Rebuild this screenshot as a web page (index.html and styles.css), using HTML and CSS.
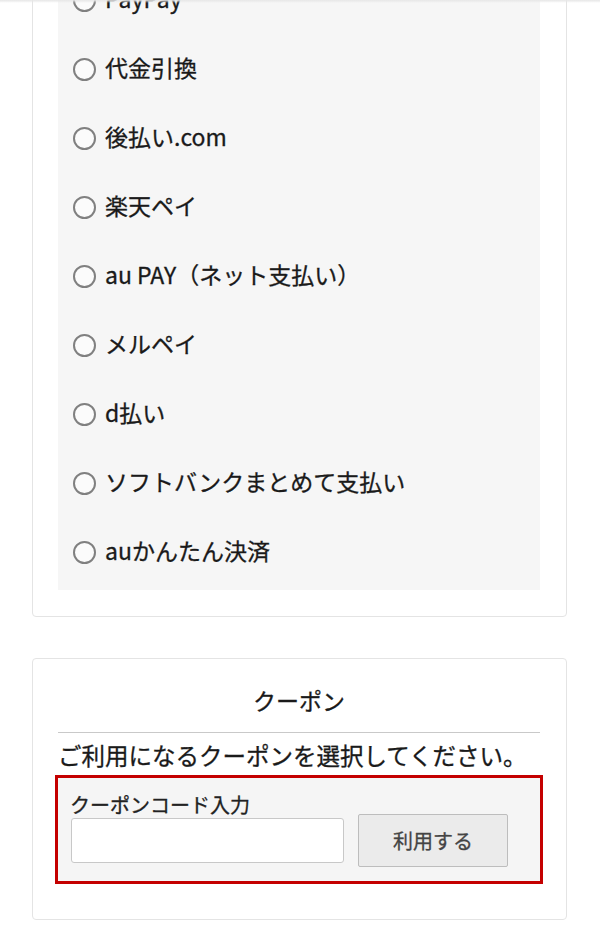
FILE: index.html
```html
<!DOCTYPE html>
<html lang="ja">

<head>
    <meta charset="UTF-8">
    <meta name="viewport" content="width=device-width, initial-scale=1.0">
    <title>お支払い方法</title>

    <link rel="stylesheet" href="styles.css">
</head>

<body>

    <div class="container">
        <div class="card card--payment">
            <div class="payment__list">
                <label class="payment__item"><input type="radio" name="payment" class="payment__radio">PayPay</label>
                <label class="payment__item"><input type="radio" name="payment" class="payment__radio">代金引換</label>
                <label class="payment__item"><input type="radio" name="payment" class="payment__radio">後払い.com</label>
                <label class="payment__item"><input type="radio" name="payment" class="payment__radio">楽天ペイ</label>
                <label class="payment__item"><input type="radio" name="payment" class="payment__radio">au PAY（ネット支払い）</label>
                <label class="payment__item"><input type="radio" name="payment" class="payment__radio">メルペイ</label>
                <label class="payment__item"><input type="radio" name="payment" class="payment__radio">d払い</label>
                <label class="payment__item"><input type="radio" name="payment" class="payment__radio">ソフトバンクまとめて支払い</label>
                <label class="payment__item"><input type="radio" name="payment" class="payment__radio">auかんたん決済</label>
            </div>
        </div>

        <div class="card card--coupon">
            <h2 class="coupon__title">クーポン</h2>
            <p class="coupon__lead">ご利用になるクーポンを選択してください。</p>
            <div class="coupon__box">
                <div class="coupon__label">クーポンコード入力</div>
                <div class="coupon__form">
                    <input type="text" class="coupon__input">
                    <button type="button" class="coupon__button">利用する</button>
                </div>
            </div>
        </div>
    </div>

</body>

</html>
```

FILE: styles.css
```css
body {
    margin: 0;
    background-color: #fff;
    color: #1a1a1a;
    font-family: "Noto Sans CJK JP", "Noto Sans", sans-serif;
    -webkit-text-stroke: 0.3px currentColor;
    overflow: hidden;
}

body::before {
    content: "";
    position: fixed;
    top: 0;
    left: 0;
    right: 0;
    height: 3px;
    background: linear-gradient(#e6e6e6, rgba(255, 255, 255, 0));
}

.container {
    padding: 0 33px 0 32px;
}

.card {
    border: 1px solid #e4e4e4;
    border-radius: 4px;
    background-color: #fff;
}

.card--payment {
    margin-top: -60px;
    padding: 0 26px 26px 25px;
}

.payment__list {
    background-color: #f6f6f6;
    padding: 22.5px 0 5.5px 15px;
}

.payment__item {
    display: flex;
    align-items: center;
    height: 69px;
    font-size: 23px;
    color: #1a1a1a;
}

.payment__radio {
    appearance: none;
    -webkit-appearance: none;
    box-sizing: border-box;
    width: 23px;
    height: 23px;
    margin: 5px 9px 0 0;
    border: 2.5px solid #808080;
    border-radius: 50%;
    background-color: #fbfbfb;
    flex-shrink: 0;
}

.card--coupon {
    margin-top: 41px;
    padding: 24px 26px 35px 25px;
}

.coupon__title {
    margin: 0;
    font-size: 23px;
    font-weight: normal;
    line-height: 34px;
    text-align: center;
    padding-bottom: 15px;
    border-bottom: 1px solid #c9c9c9;
}

.coupon__lead {
    margin: 5px 0 3px;
    font-size: 23.5px;
    line-height: 34px;
    white-space: nowrap;
}

.coupon__box {
    margin: 0 -3px;
    border: 3px solid #c40000;
    background-color: #f5f5f5;
    padding: 18px 12px 14px 12px;
}

.coupon__label {
    font-size: 20px;
    line-height: 18px;
    color: #222;
}

.coupon__form {
    display: flex;
    align-items: center;
    height: 53px;
}

.coupon__input {
    box-sizing: border-box;
    width: 273px;
    height: 45px;
    margin: 0 0 0 1px;
    border: 1px solid #c8c8c8;
    border-radius: 3px;
    background-color: #fff;
}

.coupon__button {
    box-sizing: border-box;
    width: 150px;
    height: 53px;
    margin-left: 14px;
    border: 1px solid #bdbdbd;
    border-radius: 2px;
    background-color: #ebebeb;
    color: #444;
    font-family: "Noto Sans CJK JP", "Noto Sans", sans-serif;
    -webkit-text-stroke: 0.3px currentColor;
    font-size: 20px;
}
```
